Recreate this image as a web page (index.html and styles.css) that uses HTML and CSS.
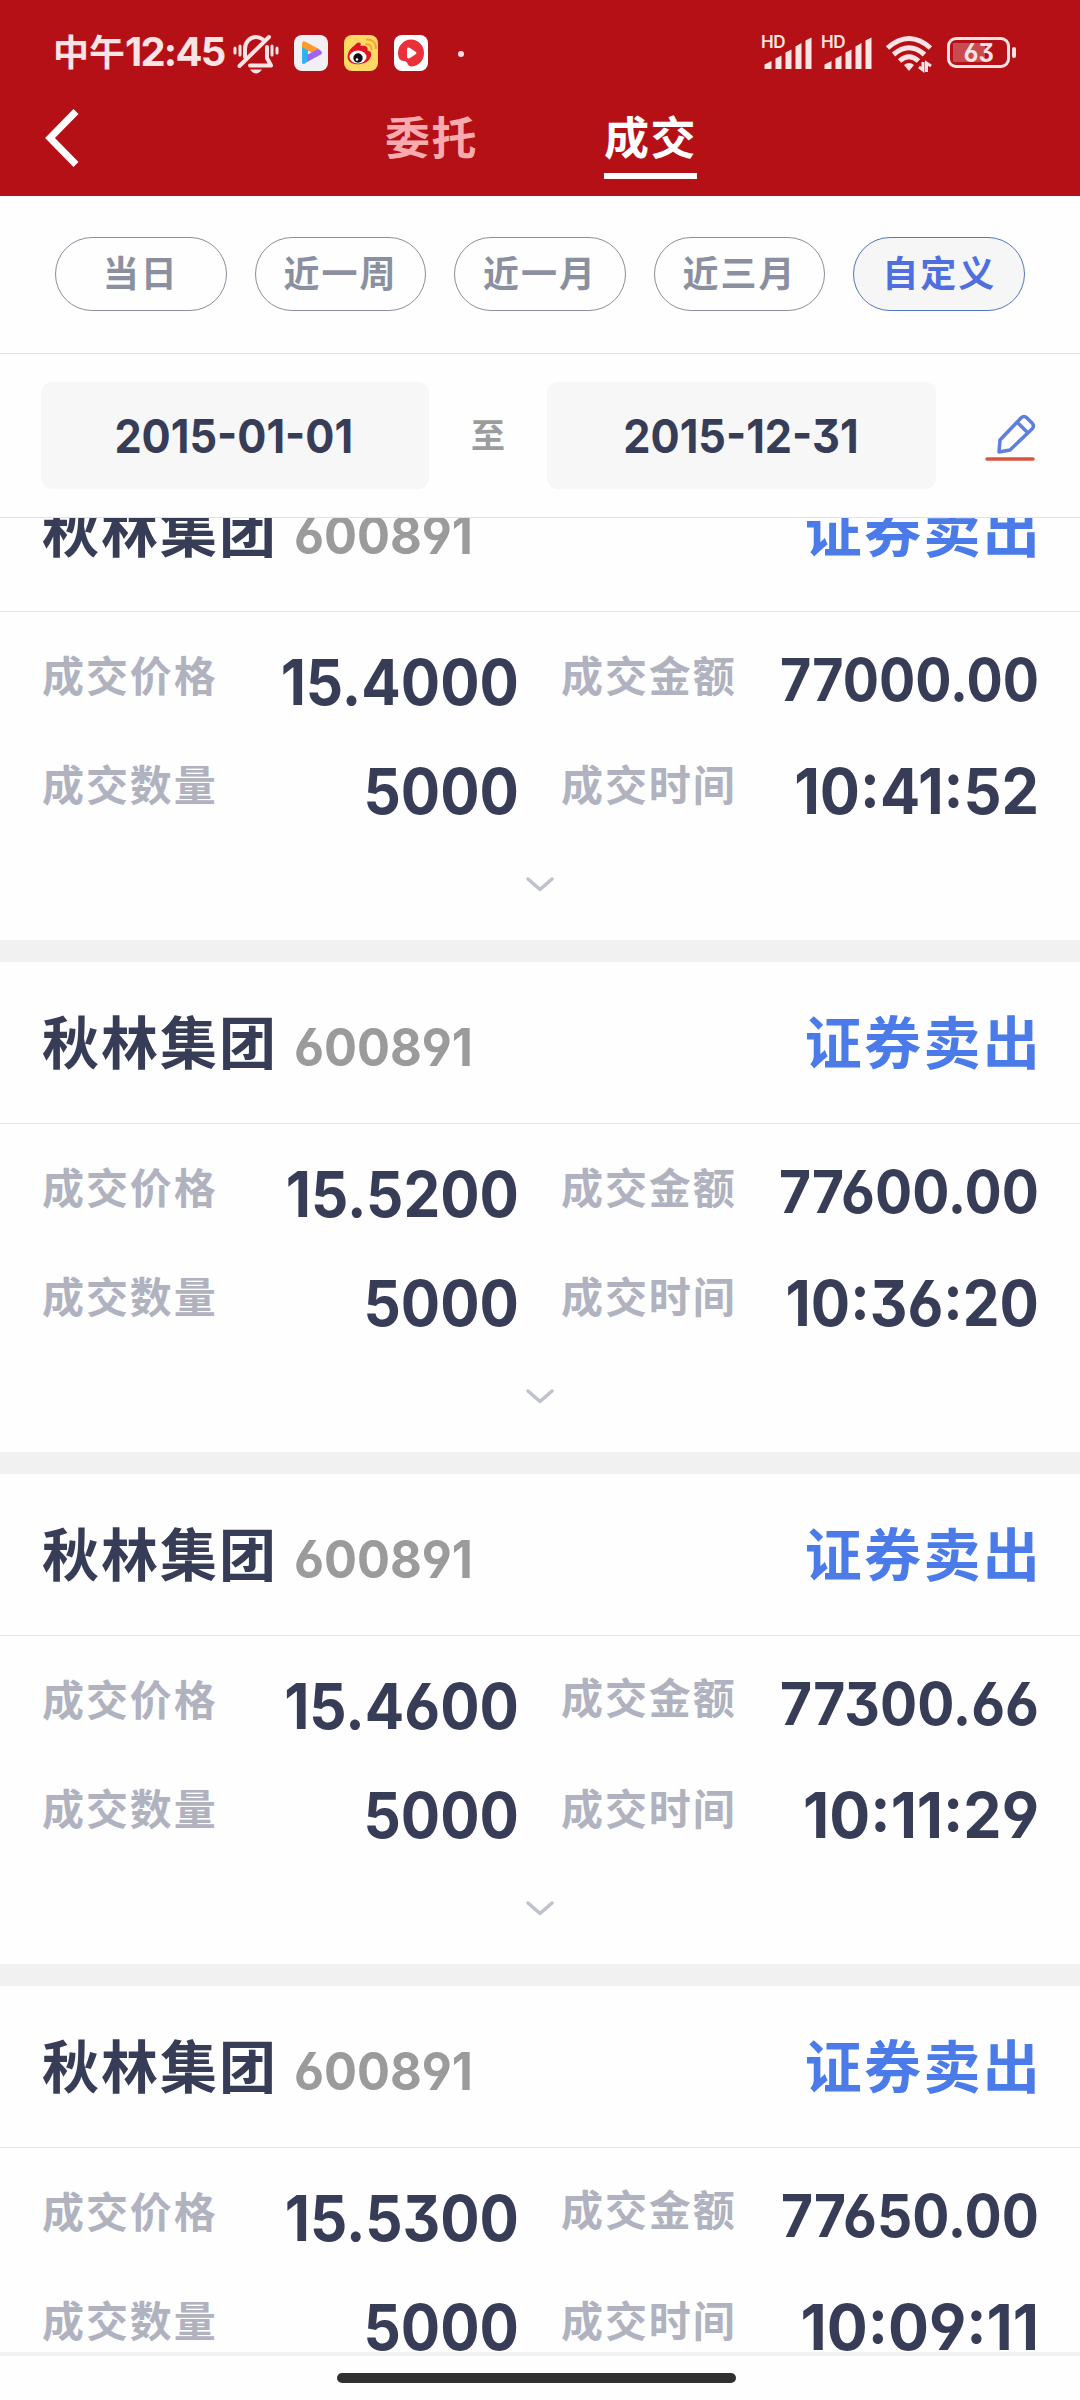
FILE: index.html
```html
<!DOCTYPE html>
<html lang="zh-CN">
<head>
<meta charset="utf-8">
<title>成交</title>
<link rel="stylesheet" href="styles.css">
</head>
<body>
<div class="screen">
  <header class="header">
    <div class="status">
      <span class="clock">中午<span class="clock-digits">12:45</span></span>
      <svg class="ic-mute" width="46" height="42" viewBox="0 0 46 42" fill="none" stroke="#f9e3e4" stroke-width="4" stroke-linecap="round" stroke-linejoin="round">
        <path d="M12 23V15C12 8 17 3 23 3C25.500 3 28 4 30 5.500M34 13V24L38 31.500H17"/>
        <path d="M6.500 32L36 3"/>
        <path stroke-width="3" d="M2 14V19M7 12V21M39 12V21M44 14V19"/>
        <path fill="#f9e3e4" stroke="none" d="M17 35.500H29Q26 39.500 23 39.500T17 35.500Z"/>
      </svg>
      <svg class="ic-app" width="34" height="36" viewBox="0 0 34 36">
        <rect width="34" height="36" rx="8" fill="#f1f1f5"/>
        <path d="M8 9V27Q8 30 11 28.500L14 26V13Z" fill="#2fb4f0"/>
        <path d="M8 9Q8 5.500 11 6.500L25 14L20 19L8 12Z" fill="#ff9a2e"/>
        <path d="M26 15Q30 18 26 20L13 27V20L22 15Q24 13.500 26 15Z" fill="#a163f2"/>
      </svg>
      <svg class="ic-app" width="34" height="36" viewBox="0 0 34 36">
        <rect width="34" height="36" rx="8" fill="#ffd965"/>
        <path d="M3.500 22C4 14 10 11 11 10C13 6.500 18 6.500 16.500 11C20 10 25 11 23.500 15.500C28 16 28 21 26 23C23 31 4 32 3.500 22Z" fill="#df1420"/>
        <ellipse cx="14" cy="22" rx="8.500" ry="6.500" fill="#fff"/>
        <circle cx="14" cy="23" r="4.700" fill="#111"/>
        <circle cx="13" cy="24.500" r="1.300" fill="#fff"/>
        <path d="M22 4.500Q32 4 32 14M21.500 9Q28 9 27.500 15" fill="none" stroke="#f3a52e" stroke-width="2"/>
      </svg>
      <svg class="ic-app" width="34" height="36" viewBox="0 0 34 36">
        <rect width="34" height="36" rx="8" fill="#fff"/>
        <path d="M4 18A13 13.500 0 1 1 30 18C30 26 24 31.500 17 31.500C13 31 14 26 10 26C6 26 4 23 4 18Z" fill="#ea3039"/>
        <path d="M13 13.500V22.500Q14 24 16 23L22 19Q23 18 22 17L16 13Q14 12 13 13.500Z" fill="#fff"/>
      </svg>
      <i class="more-dot"></i>
      <div class="status-right">
        <svg class="ic-signal" width="51" height="36" viewBox="0 0 51 36"><use href="#signal"/></svg>
        <svg class="ic-signal" width="51" height="36" viewBox="0 0 51 36">
          <g id="signal" fill="#fae4e5">
            <text class="hd" x="-1" y="12">HD</text>
            <path d="M2.500 33V28.500L9.500 25V33ZM13.500 33V22.500L19.500 19.500V33ZM23.500 33V16.500L29.500 13.500V33ZM33.500 33V10.500L39.500 7V33ZM43.500 33V4.500L49.500 1.500V33Z"/>
          </g>
        </svg>
        <svg class="ic-wifi" width="46" height="36" viewBox="0 0 46 36" fill="none" stroke="#fae4e5" stroke-width="5">
          <path d="M1.500 12Q23 -7 44.500 12M7.500 18.500Q23 5 38.500 18.500M13.500 25Q23 16.500 32.500 25"/>
          <path fill="#fae4e5" stroke="none" d="M18 29Q23 25 28 29L23 35Z"/>
          <path stroke-width="3" d="M37 26V34L33 31M40.500 36V27L45 30"/>
        </svg>
        <div class="battery"><span>63</span></div>
      </div>
    </div>
    <nav class="tabs">
      <svg class="back" width="34" height="60" viewBox="0 0 34 60"><path d="M31 3.500L5 30L31 56.500" fill="none" stroke="#fff" stroke-width="7"/></svg>
      <a class="tab">委托</a>
      <a class="tab tab-on">成交</a>
    </nav>
  </header>

  <div class="ranges">
    <span class="pill">当日</span><span class="pill">近一周</span><span class="pill">近一月</span><span class="pill">近三月</span><span class="pill pill-on">自定义</span>
  </div>

  <div class="dates">
    <div class="date"><span class="date-text">2015-01-01</span></div>
    <span class="to">至</span>
    <div class="date date-end"><span class="date-text">2015-12-31</span></div>
    <svg class="edit" width="52" height="50" viewBox="0 0 52 50" fill="none" stroke-linecap="round" stroke-linejoin="round">
      <path d="M16 27L37 5Q40 2 43 5L48 10Q51 13 48 16L26 37L15 39ZM33 9L44 20" stroke="#5f7fdc" stroke-width="3.500"/>
      <path d="M3 46H49" stroke="#db5442" stroke-width="3.500"/>
    </svg>
  </div>

  <main class="list">
    <section class="card">
      <div class="card-head"><b class="name">秋林集团</b><span class="code">600891</span><b class="side">证券卖出</b></div>
      <div class="grid">
        <span class="label">成交价格</span><span class="value">15.4000</span><span class="label label-r">成交金额</span><span class="value amount zeros">77000.00</span>
        <span class="label">成交数量</span><span class="value">5000</span><span class="label label-r">成交时间</span><span class="value time">10:41:52</span>
      </div>
      <svg class="more" width="30" height="18" viewBox="0 0 30 18"><path d="M3 3L15 13.500L27 3"/></svg>
    </section>
    <section class="card">
      <div class="card-head"><b class="name">秋林集团</b><span class="code">600891</span><b class="side">证券卖出</b></div>
      <div class="grid">
        <span class="label">成交价格</span><span class="value">15.5200</span><span class="label label-r">成交金额</span><span class="value amount">77600.00</span>
        <span class="label">成交数量</span><span class="value">5000</span><span class="label label-r">成交时间</span><span class="value">10:36:20</span>
      </div>
      <svg class="more" width="30" height="18" viewBox="0 0 30 18"><path d="M3 3L15 13.500L27 3"/></svg>
    </section>
    <section class="card">
      <div class="card-head"><b class="name">秋林集团</b><span class="code">600891</span><b class="side">证券卖出</b></div>
      <div class="grid">
        <span class="label">成交价格</span><span class="value">15.4600</span><span class="label label-r raised">成交金额</span><span class="value amount">77300.66</span>
        <span class="label">成交数量</span><span class="value">5000</span><span class="label label-r">成交时间</span><span class="value ones">10:11:29</span>
      </div>
      <svg class="more" width="30" height="18" viewBox="0 0 30 18"><path d="M3 3L15 13.500L27 3"/></svg>
    </section>
    <section class="card">
      <div class="card-head"><b class="name">秋林集团</b><span class="code">600891</span><b class="side">证券卖出</b></div>
      <div class="grid">
        <span class="label">成交价格</span><span class="value">15.5300</span><span class="label label-r raised">成交金额</span><span class="value amount">77650.00</span>
        <span class="label">成交数量</span><span class="value">5000</span><span class="label label-r">成交时间</span><span class="value ones">10:09:11</span>
      </div>
    </section>
  </main>

  <footer class="home"><i class="home-bar"></i></footer>
</div>
</body>
</html>
```
FILE: styles.css
```css
* { box-sizing: border-box; }
body { margin: 0; }
.screen {
  display: flex;
  flex-direction: column;
  width: 1080px;
  height: 2400px;
  overflow: hidden;
  background: #fefefe;
  color: #383d57;
  font-family: Inter, "Noto Sans CJK SC", sans-serif;
  font-feature-settings: "cv03", "cv04", "cv09";
  white-space: nowrap;
}

.header { flex: none; height: 196px; background: #b51016; }
.status { display: flex; align-items: flex-start; height: 96px; padding: 34px 70px 0 53px; color: #f9e3e4; }
.clock { width: 180px; margin-top: -3px; font-size: 36px; font-weight: 700; line-height: 42px; }
.clock-digits { font-size: 40px; letter-spacing: -1.800px; }
.ic-mute { margin-right: 15px; }
.ic-app { margin: 1px 16px 0 0; }
.more-dot { width: 6px; height: 6px; margin: 17px 0 0 14px; border-radius: 50%; background: #f9e3e4; }
.status-right { display: flex; margin-left: auto; }
.ic-signal { margin: 2px 9px 0 0; overflow: visible; }
.hd { font: 600 17px Inter, sans-serif; letter-spacing: -0.500px; }
.ic-wifi { margin: 2px 15px 0 4px; overflow: visible; }
.battery {
  position: relative;
  width: 63px;
  height: 31px;
  margin: 3px 0 0;
  border: 3px solid #fae4e5;
  border-radius: 9px;
  font-size: 25px;
  font-weight: 700;
  line-height: 27px;
  text-align: center;
  background: linear-gradient(#c94a50, #c94a50) 3px 3px / 32px 19px no-repeat;
}
.battery span { display: inline-block; transform: scaleX(0.95); }
.battery::after { content: ""; position: absolute; left: 62px; top: 7px; width: 4px; height: 11px; border-radius: 2px; background: #fae4e5; }
.tabs { display: flex; height: 100px; padding-left: 45px; }
.back { margin: 12px 305px 0 0; }
.tab { height: 83px; margin-right: 125px; padding: 0 1px; color: #f8abae; font-size: 45px; font-weight: 700; line-height: 86px; letter-spacing: 1.500px; }
.tab-on { padding: 0; border-bottom: 6px solid #fff; color: #fff; }

.ranges { flex: none; display: flex; gap: 28px; height: 158px; padding: 41px 55px 0; border-bottom: 1px solid #e2e2e4; }
.pill { flex: 1; height: 74px; border: 1px solid #8b8e9b; border-radius: 37px; color: #8b90a0; font-size: 36px; font-weight: 700; line-height: 72px; letter-spacing: 2px; text-align: center; }
.pill-on { border-color: #5474c4; background: #f6f6f6; color: #4f6fe0; }

.dates { flex: none; display: flex; height: 164px; padding: 28px 0 0 41px; border-bottom: 1px solid #e2e2e4; }
.date { width: 388px; height: 107px; border-radius: 11px; background: #f7f7f7; font-size: 47px; font-weight: 700; line-height: 107px; text-align: center; }
.date-end { width: 389px; }
.date-text { display: inline-block; margin-left: -2px; transform: scaleX(0.92); }
.to { width: 118px; color: #9c9c9c; font-size: 34px; font-weight: 700; line-height: 107px; text-align: center; }
.edit { margin: 31px 0 0 48px; }

.list { flex: 1; display: flex; flex-direction: column; justify-content: flex-start; min-height: 0; overflow: hidden; }
.card { flex: none; height: 512px; border-bottom: 22px solid #f1f1f1; }
.card:first-child { margin-top: -68px; }
.card-head { display: flex; height: 162px; padding: 0 38px 0 42px; border-bottom: 1px solid #e2e2e4; line-height: 163px; }
.name { font-size: 57px; font-weight: 700; letter-spacing: 2px; }
.code { margin-left: 16px; color: #9b9b9b; font-size: 52px; font-weight: 700; line-height: 172px; transform: scaleX(0.94); transform-origin: left; }
.side { margin-left: auto; color: #4a7be8; font-size: 57px; font-weight: 700; letter-spacing: 2.300px; }
.grid { display: grid; grid-template-columns: 176px 301px 192px 1fr; grid-auto-rows: 109px; padding: 10px 41px 0 42px; height: 253px; }
.label { color: #b0b2bf; font-size: 42px; font-weight: 700; line-height: 110px; letter-spacing: 1.900px; }
.label-r { padding-left: 42px; }
.raised { margin-top: -2px; }
.value { font-size: 63px; font-weight: 700; line-height: 120px; text-align: right; transform: scaleX(0.927); transform-origin: right; }
.amount { font-size: 59px; line-height: 116px; transform: scaleX(0.935); }
.zeros { transform: scaleX(0.912); }
.time { transform: scaleX(0.945); }
.ones { transform: scaleX(0.965); }
.more { display: block; margin: 11px auto 0; fill: none; stroke: #c0c2cb; stroke-width: 3.500; stroke-linecap: round; stroke-linejoin: round; }

.home { flex: none; height: 48px; padding-top: 17px; border-top: 4px solid #f1f1f1; background: #fefefe; }
.home-bar { display: block; width: 399px; height: 10px; margin-left: 337px; border-radius: 5px; background: #303030; }
```
